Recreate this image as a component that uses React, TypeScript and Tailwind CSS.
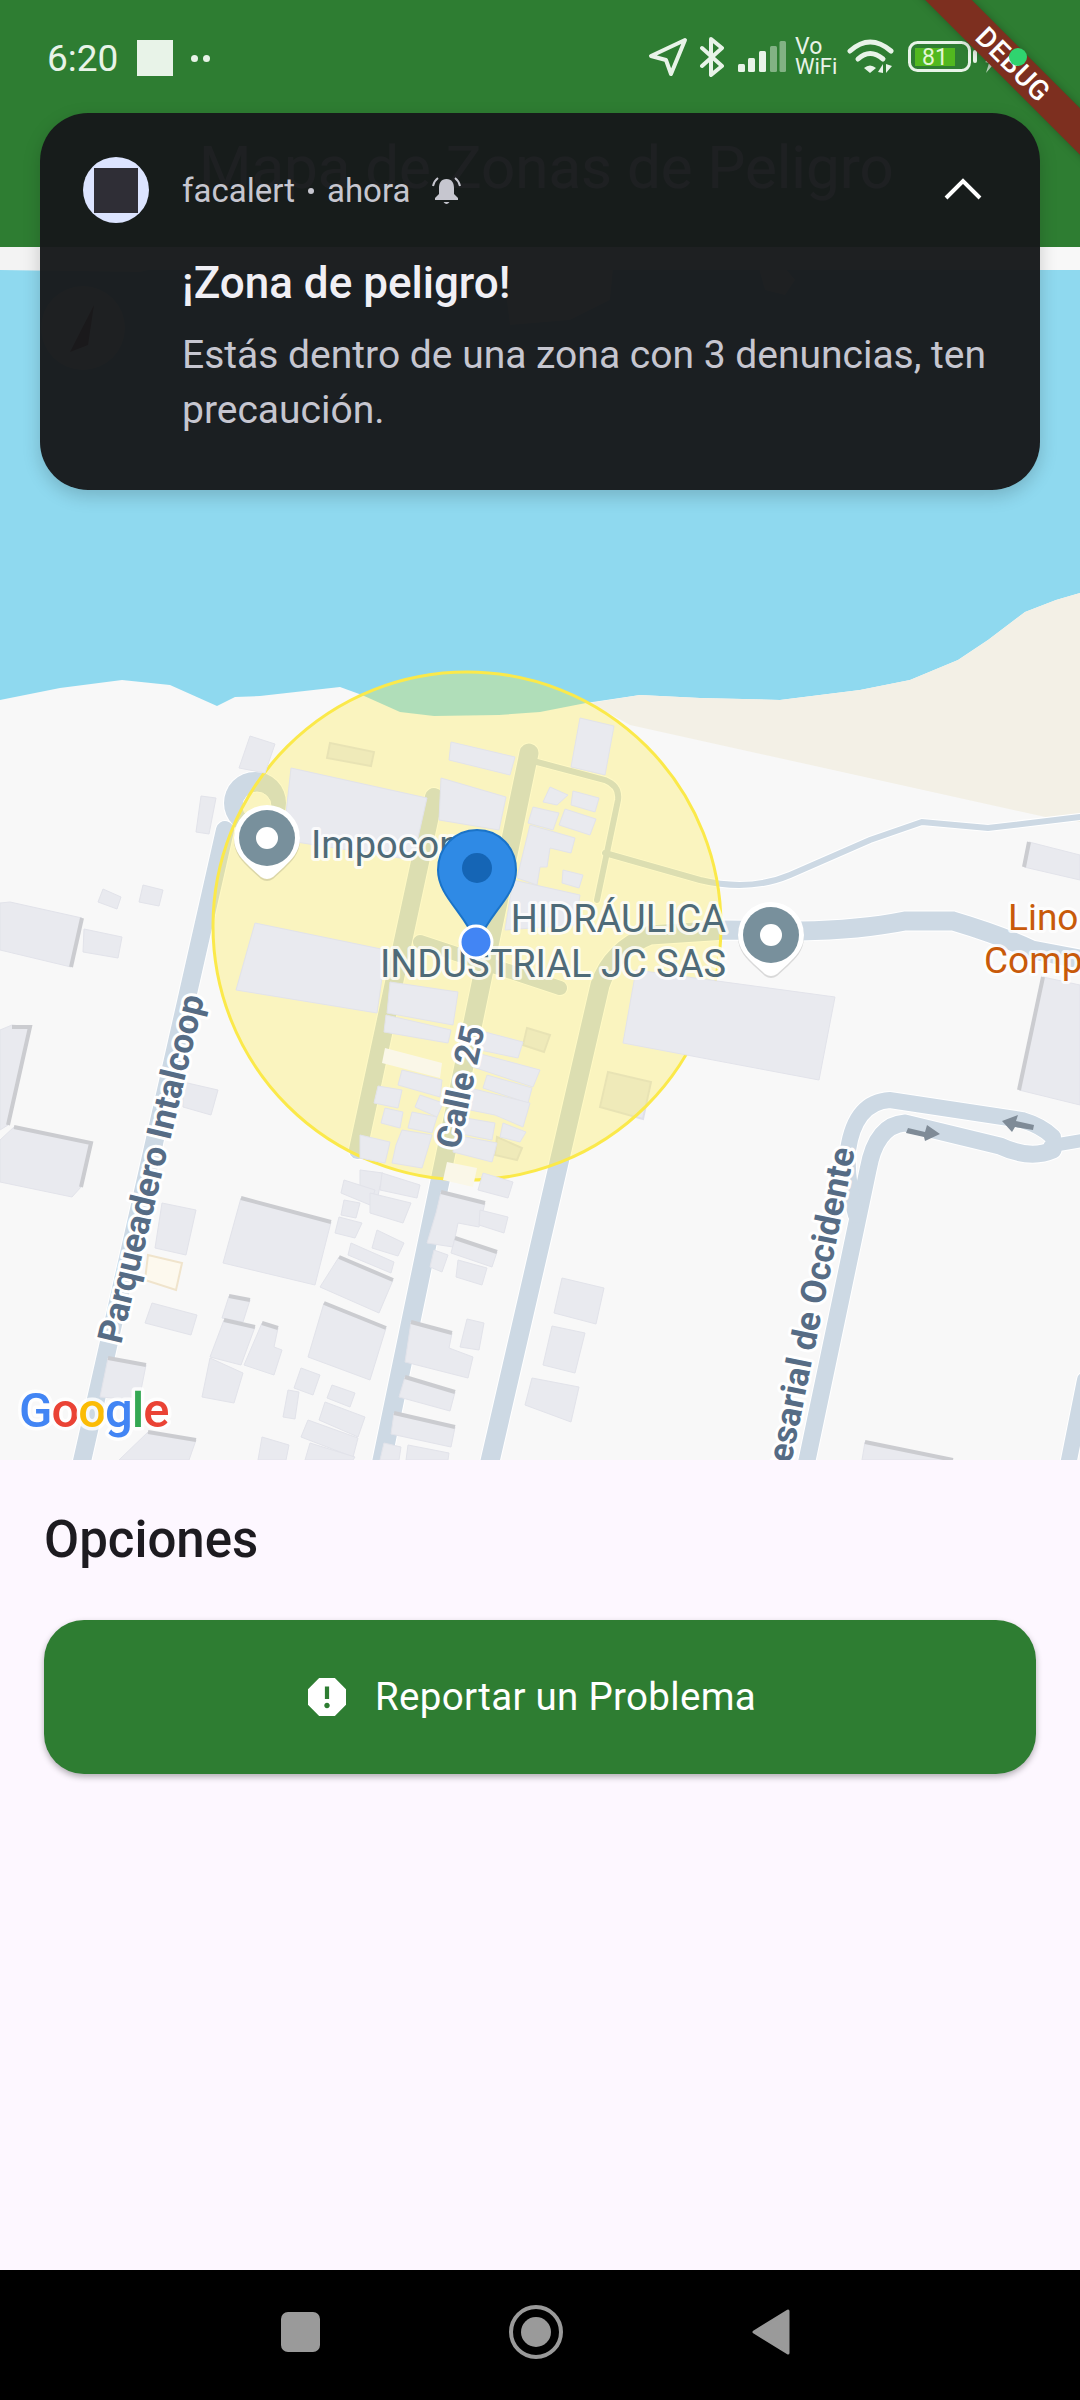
const FLAT_BUILDINGS = [
  '330,743 374,752 371,766 327,758',
  '608,1072 651,1082 643,1119 600,1107',
  '527,1028 550,1035 544,1052 523,1045',
  '497,1137 522,1148 517,1160 495,1155',
]

const BUILDINGS = [
  '250,736 275,744 265,773 239,768',
  '201,796 216,798 209,834 196,832',
  '103,889 121,897 117,909 98,902',
  '143,885 163,890 159,906 139,902',
  '0,903 10,902 82,918 71,967 0,950',
  '84,929 122,937 118,958 83,952',
  '291,768 427,798 413,860 283,840',
  '255,923 386,950 377,1013 236,990',
  '451,742 515,757 510,775 449,760',
  '441,778 506,797 499,830 439,820',
  '390,982 458,992 453,1025 387,1013',
  '386,1015 451,1030 448,1043 384,1032',
  '580,718 614,726 605,775 571,767',
  '550,787 568,795 557,805 543,802',
  '573,791 599,798 595,812 571,805',
  '565,809 596,819 590,835 559,825',
  '533,807 559,813 553,830 528,823',
  '530,825 575,838 571,853 550,848 547,867 540,867 537,885 517,878',
  '563,870 583,875 579,888 562,883',
  '513,880 580,895 575,925 505,930',
  '636,970 835,997 819,1080 623,1043',
  '1029,842 1080,855 1080,880 1024,867',
  '1043,977 1080,985 1080,1105 1019,1090',
  '183,1082 218,1090 211,1115 183,1107',
  '14,1127 91,1143 81,1187 72,1197 0,1182 0,1140',
  '162,1203 196,1210 186,1255 155,1248',
  '152,1303 197,1315 191,1335 145,1323',
  '241,1198 331,1222 315,1285 223,1263',
  '229,1296 250,1300 243,1322 222,1318',
  '224,1320 255,1327 241,1365 210,1357',
  '262,1323 278,1328 274,1347 282,1350 274,1375 244,1365',
  '210,1358 243,1373 234,1403 202,1397',
  '108,1358 146,1365 139,1400 100,1397',
  '148,1432 196,1440 189,1460 119,1460',
  // block beside Calle 25, inside the circle
  '402,1070 442,1080 440,1097 398,1085',
  '378,1086 402,1090 398,1108 374,1103',
  '385,1108 403,1112 400,1128 381,1123',
  '420,1095 443,1103 437,1117 415,1107',
  '412,1112 437,1117 432,1133 408,1128',
  '402,1130 432,1135 422,1168 392,1163 396,1145',
  '360,1135 390,1142 385,1163 360,1158',
  '485,1032 523,1042 518,1058 480,1050',
  '477,1053 540,1070 533,1087 473,1067',
  '487,1075 532,1088 528,1103 483,1088',
  '470,1088 530,1103 523,1127 495,1115 470,1110',
  '460,1117 495,1123 492,1140 457,1133',
  '503,1123 526,1132 520,1142 500,1137',
  '455,1135 497,1143 492,1162 453,1152',
  '483,1173 513,1182 508,1198 478,1190',
  '360,1170 383,1173 377,1200 360,1190',
  '344,1180 375,1190 370,1205 341,1193',
  '382,1173 420,1185 417,1198 380,1190',
  '370,1193 411,1203 403,1223 370,1213',
  '344,1200 360,1203 356,1218 341,1215',
  '339,1217 362,1223 355,1238 335,1233',
  '377,1230 404,1243 398,1256 372,1248',
  '351,1243 394,1262 391,1273 348,1255',
  '339,1257 393,1280 379,1313 320,1287',
  '324,1303 386,1328 370,1380 308,1357',
  '301,1368 320,1375 313,1395 294,1388',
  '288,1390 299,1392 295,1419 283,1417',
  '332,1385 355,1393 350,1407 327,1398',
  '325,1402 365,1417 358,1437 319,1420',
  '308,1420 358,1438 353,1457 301,1437',
  '310,1443 355,1457 353,1460 305,1460',
  '262,1437 289,1445 286,1460 258,1460',
  '441,1192 485,1203 479,1227 458,1223 453,1247 427,1243 436,1213',
  '480,1210 508,1217 504,1233 479,1225',
  '455,1238 497,1252 492,1267 451,1253',
  '434,1250 448,1255 442,1272 430,1267',
  '458,1260 487,1268 482,1285 456,1277',
  '411,1322 452,1333 449,1348 473,1357 468,1378 405,1362',
  '467,1319 484,1323 479,1350 460,1347',
  '405,1377 455,1392 450,1411 399,1397',
  '394,1413 455,1427 451,1447 391,1434',
  '408,1445 449,1453 448,1460 406,1460',
  '384,1443 401,1447 399,1460 380,1460',
  '562,1278 604,1288 596,1324 554,1313',
  '552,1326 585,1333 575,1373 543,1365',
  '532,1378 579,1387 571,1422 525,1405',
  '865,1442 953,1460 862,1460',
  '0,1030 12,1025 30,1027 8,1125 0,1130',
]

// darker top or side edge of the taller blocks
const SHADES = [
  'M82 918 L71 967',
  'M14 1127 L91 1143 L81 1187',
  'M241 1198 L331 1222',
  'M229 1296 L250 1300',
  'M224 1320 L255 1327',
  'M262 1323 L278 1328',
  'M108 1358 L146 1365',
  'M148 1432 L196 1440',
  'M339 1257 L393 1280',
  'M324 1303 L386 1328',
  'M411 1322 L452 1333',
  'M405 1377 L455 1392',
  'M394 1413 L455 1427',
  'M441 1192 L485 1203',
  'M455 1238 L497 1252',
  'M865 1442 L953 1460',
  'M1029 842 L1024 867',
  'M1043 977 L1019 1090',
  'M12 1027 L30 1027 L8 1125',
]

const ROADS = [
  { d: 'M80 1470 L225 830', w: 18 },
  { d: 'M380 1470 L529 753', w: 19 },
  { d: 'M434 797 L358 1150', w: 18 },
  { d: 'M488 1470 L600 985 Q612 950 650 935 L726 930 L800 931 Q860 930 905 921 L953 921 Q1000 935 1032 950 L1085 960', w: 19 },
  { d: 'M805 1470 L868 1170 Q876 1125 905 1123 L1000 1146 Q1030 1160 1053 1150', w: 17 },
  { d: 'M856 1215 Q846 1180 848 1150 Q855 1102 890 1100 L1022 1120 Q1042 1126 1053 1137', w: 16 },
  { d: 'M1050 1146 L1085 1140', w: 13 },
  { d: 'M1067 1470 L1085 1380', w: 16 },
  { d: 'M537 762 L605 780 Q620 786 618 800 L597 900', w: 6 },
  { d: 'M605 853 L700 880 Q750 892 790 875 L870 840 L922 822 L988 828 L1080 817', w: 6 },
  { d: 'M420 942 L560 988', w: 14 },
]

function GoogleMap() {
  return (
    <svg className="block h-[1213px] w-[1080px] shrink-0" viewBox="0 247 1080 1213">
      <rect x="0" y="247" width="1080" height="1213" fill="#f8f8f8" />
      <path
        d="M0 270 H1080 V593 L1056 600 L1025 612 L988 640 L958 660 L910 680 L860 690 L780 700 L700 698 L640 695 L586 703 L540 712 L499 715 L434 716 L400 712 L362 695 L340 687 L260 696 L235 697 L217 706 L170 685 L122 680 L60 688 L0 700 Z"
        fill="#8fd9ef"
      />
      <path
        d="M590 703 L640 695 L700 698 L780 700 L860 690 L910 680 L958 660 L988 640 L1025 612 L1056 600 L1080 593 V822 L1050 818 L630 725 Z"
        fill="#f3f0e6"
      />
      <path d="M0 247 H250 L140 272 L0 270 Z" fill="#f3f3f3" />
      <path d="M500 247 H615 L610 300 L570 320 L510 325 Z" fill="#f8f0f0" />
      <path d="M753 247 H768 L795 280 L785 295 L765 290 Z" fill="#fff0f0" />
      <circle cx="83" cy="328" r="42" fill="#f8f0f0" />
      <path d="M94 305 L88 345 L70 352 Z" fill="#7f2020" />

      {ROADS.map((road) => (
        <path key={road.d} d={road.d} fill="none" stroke="#ffffff" strokeWidth={road.w + 2} strokeLinecap="round" />
      ))}
      <circle cx="255" cy="803" r="32" fill="#ffffff" />
      {ROADS.map((road) => (
        <path key={road.d} d={road.d} fill="none" stroke="#cdd9e4" strokeWidth={road.w} strokeLinecap="round" />
      ))}
      <circle cx="255" cy="803" r="31" fill="#cdd9e4" />
      <circle cx="257" cy="806" r="14" fill="#f8f8f8" stroke="#ffffff" strokeWidth="1" />
      <path d="M908 1128 L925 1132 L927 1125 L940 1134 L925 1141 L924 1137 L906 1133 Z" fill="#7f8b97" />
      <path d="M1034 1125 L1016 1121 L1018 1115 L1002 1121 L1012 1132 L1015 1127 L1033 1130 Z" fill="#7f8b97" />

      {FLAT_BUILDINGS.map((points) => (
        <polygon key={points} points={points} fill="#e9eaef" stroke="#dfe0e9" strokeWidth="2" />
      ))}
      <circle cx="467" cy="926" r="254" fill="#ffeb3b" fillOpacity="0.3" stroke="#fbe94a" strokeWidth="3" />

      {BUILDINGS.map((points) => (
        <polygon key={points} points={points} fill="#e9eaef" stroke="#e2e3ea" strokeWidth="1" />
      ))}
      {SHADES.map((d) => (
        <path key={d} d={d} fill="none" stroke="#cbccd0" strokeWidth="4" />
      ))}
      <polygon points="385,1048 442,1063 440,1078 382,1063" fill="#faf7e8" />
      <polygon points="447,1162 477,1168 473,1187 443,1180" fill="#faf7e8" />
      <polygon points="148,1255 182,1263 176,1290 145,1280" fill="#fdf9ee" stroke="#f0e4cc" strokeWidth="2" />

      <g fontWeight="700" fill="#566c85" stroke="#ffffff" strokeWidth="6" paintOrder="stroke" strokeLinejoin="round">
        <text transform="translate(121 1345) rotate(-76.5)" fontSize="35">Parqueadero Intalcoop</text>
        <text transform="translate(459 1150) rotate(-78)" fontSize="34">Calle 25</text>
        <text transform="translate(855 1150) rotate(-78.5)" fontSize="35" textAnchor="end">Empresarial de Occidente</text>
      </g>

      <g fontSize="38" fill="#4f6b78" stroke="#ffffff" strokeOpacity="0.8" strokeWidth="6" paintOrder="stroke" strokeLinejoin="round">
        <text x="311" y="858">Impocon</text>
        <text x="726" y="932" textAnchor="end">HIDRÁULICA</text>
        <text x="726" y="977" textAnchor="end">INDUSTRIAL JC SAS</text>
      </g>
      <g fontSize="37" fill="#c85a0a" stroke="#ffffff" strokeOpacity="0.8" strokeWidth="6" paintOrder="stroke" strokeLinejoin="round">
        <text x="1008" y="930">Lino</text>
        <text x="984" y="973">Comp</text>
      </g>

      <PoiPin x={267} y={838} />
      <PoiPin x={771} y={935} />

      <path
        d="M477 830 C500 830 516 848 516 870 C516 896 490 912 478 942 H476 C464 912 438 896 438 870 C438 848 454 830 477 830 Z"
        fill="#2f8ae5"
        stroke="#1a73c8"
        strokeWidth="2"
      />
      <circle cx="477" cy="868" r="15" fill="#1565b5" />
      <circle cx="476" cy="942" r="16" fill="#4285f4" stroke="#ffffff" strokeWidth="3" />

      <text x="19" y="1427" fontSize="49" fontWeight="500" letterSpacing="-1" stroke="#ffffff" strokeOpacity="0.8" strokeWidth="7" paintOrder="stroke" strokeLinejoin="round">
        <tspan fill="#4285f4">G</tspan>
        <tspan fill="#ea4335">o</tspan>
        <tspan fill="#fbbc05">o</tspan>
        <tspan fill="#4285f4">g</tspan>
        <tspan fill="#34a853">l</tspan>
        <tspan fill="#ea4335">e</tspan>
      </text>
    </svg>
  )
}

function PoiPin({ x, y }: { x: number; y: number }) {
  return (
    <g transform={`translate(${x} ${y})`}>
      <path
        d="M-33 0 A33 33 0 0 1 33 0 C33 14 24 22 17 29 L6 39 Q0 43 -6 39 L-17 29 C-24 22 -33 14 -33 0 Z"
        fill="#000000"
        fillOpacity="0.12"
        transform="translate(0 2)"
      />
      <path
        d="M-33 0 A33 33 0 0 1 33 0 C33 14 24 22 17 29 L6 39 Q0 43 -6 39 L-17 29 C-24 22 -33 14 -33 0 Z"
        fill="#ffffff"
      />
      <circle r="28" fill="#78909c" />
      <circle r="11" fill="#ffffff" />
    </g>
  )
}

function StatusIcons() {
  return (
    <div className="flex h-[40px] items-center text-[#e8f3e8]">
      <svg className="h-[40px] w-[40px]" viewBox="0 0 40 40" fill="none" stroke="currentColor" strokeWidth="4" strokeLinejoin="round">
        <path d="M37 3 L3 19 L18 23 L23 37 Z" />
      </svg>
      <svg className="ml-[12px] h-[40px] w-[24px]" viewBox="0 0 24 40" fill="none" stroke="currentColor" strokeWidth="4" strokeLinejoin="round" strokeLinecap="round">
        <path d="M2 11 L22 29 L11 38 V2 L22 11 L2 29" />
      </svg>
      <svg className="ml-[14px] h-[32px] w-[48px]" viewBox="0 0 48 32" fill="currentColor">
        <rect x="0" y="23" width="7" height="8" rx="1.5" />
        <rect x="10" y="17" width="7" height="14" rx="1.5" />
        <rect x="21" y="10" width="7" height="21" rx="1.5" />
        <rect x="32" y="5" width="7" height="26" rx="1.5" opacity="0.45" />
        <rect x="41.5" y="0" width="6.5" height="31" rx="1.5" opacity="0.45" />
      </svg>
      <div className="ml-[9px] flex w-[42px] flex-col text-[22px] leading-[20px]">
        <span className="text-[23px]">Vo</span>
        <span>WiFi</span>
      </div>
      <svg className="ml-[10px] h-[36px] w-[47px]" viewBox="0 0 47 36" fill="none" stroke="currentColor" strokeWidth="5" strokeLinecap="round">
        <path d="M3 12 Q23 -6 44 12" />
        <path d="M11 20 Q23 9 36 20" />
        <path d="M17 29 Q23 24 29 29 L23 34 Z" fill="currentColor" stroke="none" />
        <path d="M36 34 V25 L31 33 Z M39 25 V34 L45 27 Z" fill="currentColor" stroke="none" />
      </svg>
      <svg className="ml-[14px] h-[32px] w-[70px]" viewBox="0 0 70 32" fill="none">
        <rect x="1.5" y="1.5" width="60" height="28" rx="8" stroke="currentColor" strokeWidth="3" />
        <rect x="7" y="7" width="40" height="18" fill="#52b81f" />
        <rect x="65" y="9" width="4" height="13" rx="2" fill="currentColor" />
        <text x="27" y="24" textAnchor="middle" fontSize="23" fill="#e4f6d8">81</text>
      </svg>
      <svg className="ml-[7px] h-[22px] w-[16px] translate-y-[5px]" viewBox="0 0 16 22" fill="currentColor" opacity="0.75">
        <path d="M16 0 L7 8 L12 9 L1 22 L4 12 L0 11 Z" />
      </svg>
    </div>
  )
}

function NotificationCard() {
  return (
    <div className="absolute left-[40px] top-[113px] h-[377px] w-[1000px] rounded-[48px] bg-[#17191b]/[0.968] pl-[43px] pr-[58px] pt-[44px] shadow-[0_6px_18px_rgba(0,0,0,0.18)]">
      <div className="flex h-[66px] items-center">
        <div className="flex h-[66px] w-[66px] items-center justify-center rounded-full bg-[#dce4ff]">
          <div className="h-[45px] w-[44px] bg-[#2f2e36]" />
        </div>
        <span className="ml-[33px] translate-y-[1px] text-[33px] leading-[40px] text-[#c6c6cf]">facalert</span>
        <span className="mx-[13px] h-[6px] w-[6px] translate-y-[1px] rounded-full bg-[#c6c6cf]" />
        <span className="translate-y-[1px] text-[33px] leading-[40px] text-[#c6c6cf]">ahora</span>
        <svg className="ml-[22px] h-[28px] w-[29px] translate-y-[1px]" viewBox="0 0 29 28" fill="#c6c6cf">
          <path d="M14.5 2 C9 2 7 6 7 11 V17 L3 21 V23 H26 V21 L22 17 V11 C22 6 20 2 14.5 2 Z" />
          <path d="M11.5 25 H17.5 Q14.5 29 11.5 25 Z" />
          <path d="M6 1 Q2 4 1 9 M23 1 Q27 4 28 9" fill="none" stroke="#c6c6cf" strokeWidth="2" />
        </svg>
        <svg className="ml-auto h-[22px] w-[38px] -translate-y-[1px]" viewBox="0 0 38 22" fill="none" stroke="#ffffff" strokeWidth="4">
          <path d="M2 20 L19 3 L36 20" />
        </svg>
      </div>
      <div className="-mr-[30px] pl-[99px]">
        <h3 className="mt-[32px] text-[44px] font-medium leading-[56px] text-[#f0eff5]">¡Zona de peligro!</h3>
        <p className="mt-[17px] text-[39px] leading-[55px] text-[#c6c6d0]">
          Estás dentro de una zona con 3 denuncias, ten precaución.
        </p>
      </div>
    </div>
  )
}

function ReportIcon() {
  return (
    <svg className="h-[38px] w-[38px]" viewBox="3 3 18 18" fill="#ffffff">
      <path d="M15.73 3H8.27L3 8.27v7.46L8.27 21h7.46L21 15.73V8.27L15.73 3zM12 17.3c-.72 0-1.3-.58-1.3-1.3 0-.72.58-1.3 1.3-1.3.72 0 1.3.58 1.3 1.3 0 .72-.58 1.3-1.3 1.3zm1-4.3h-2V7h2v6z" />
    </svg>
  )
}

export default function App() {
  return (
    <div className="relative flex h-[2400px] w-[1080px] flex-col overflow-hidden bg-[#fdf7ff] font-['Roboto',sans-serif]">
      <header className="h-[247px] shrink-0 bg-[#2e7d32] pt-[38px]">
        <div className="flex h-[40px] items-center justify-between pl-[47px] pr-[79px]">
          <div className="flex items-center text-[#e8f3e8]">
            <span className="translate-y-[1px] text-[37px] leading-[40px]">6:20</span>
            <span className="ml-[19px] h-[36px] w-[36px] bg-[#e8f3e8]" />
            <span className="ml-[18px] h-[7px] w-[7px] rounded-full bg-[#e8f3e8]" />
            <span className="ml-[5px] h-[7px] w-[7px] rounded-full bg-[#e8f3e8]" />
          </div>
          <div className="-translate-y-[1px]">
            <StatusIcons />
          </div>
        </div>
        <h1 className="mt-[55px] pl-[199px] text-[60px] leading-[70px] text-white">Mapa de Zonas de Peligro</h1>
      </header>

      <GoogleMap />

      <section className="flex-1 px-[44px] pt-[50px]">
        <h2 className="text-[51px] font-medium leading-[60px] text-[#1d1b20]">Opciones</h2>
        <button className="mt-[50px] flex h-[154px] w-full items-center justify-center rounded-[40px] bg-[#2e7d32] text-[38.5px] tracking-[0.3px] text-white shadow-[0_3px_6px_rgba(0,0,0,0.3)]">
          <ReportIcon />
          <span className="ml-[29px] mr-[16px]">Reportar un Problema</span>
        </button>
      </section>

      <nav className="flex h-[130px] shrink-0 items-center bg-black pb-[6px] pl-[281px]">
        <div className="h-[40px] w-[39px] rounded-[7px] bg-[#9a9a9a]" />
        <div className="ml-[189px] flex h-[54px] w-[54px] items-center justify-center rounded-full border-[4px] border-[#9a9a9a]">
          <div className="h-[30px] w-[30px] rounded-full bg-[#9a9a9a]" />
        </div>
        <svg className="ml-[189px] h-[46px] w-[38px]" viewBox="0 0 38 46" fill="#9a9a9a" stroke="#9a9a9a" strokeWidth="3" strokeLinejoin="round">
          <path d="M36 2 V44 L2 23 Z" />
        </svg>
      </nav>

      <NotificationCard />

      <div className="absolute left-[863px] top-[48px] flex h-[33px] w-[300px] rotate-45 items-center justify-center bg-[#7d2f1f] text-[28px] font-medium leading-none tracking-[0.5px] text-white shadow-[0_0_8px_rgba(0,0,0,0.25)]">
        DEBUG
      </div>
      <div className="absolute left-[1009px] top-[48px] h-[18px] w-[18px] rounded-full bg-[#2fd46f]" />
    </div>
  )
}
